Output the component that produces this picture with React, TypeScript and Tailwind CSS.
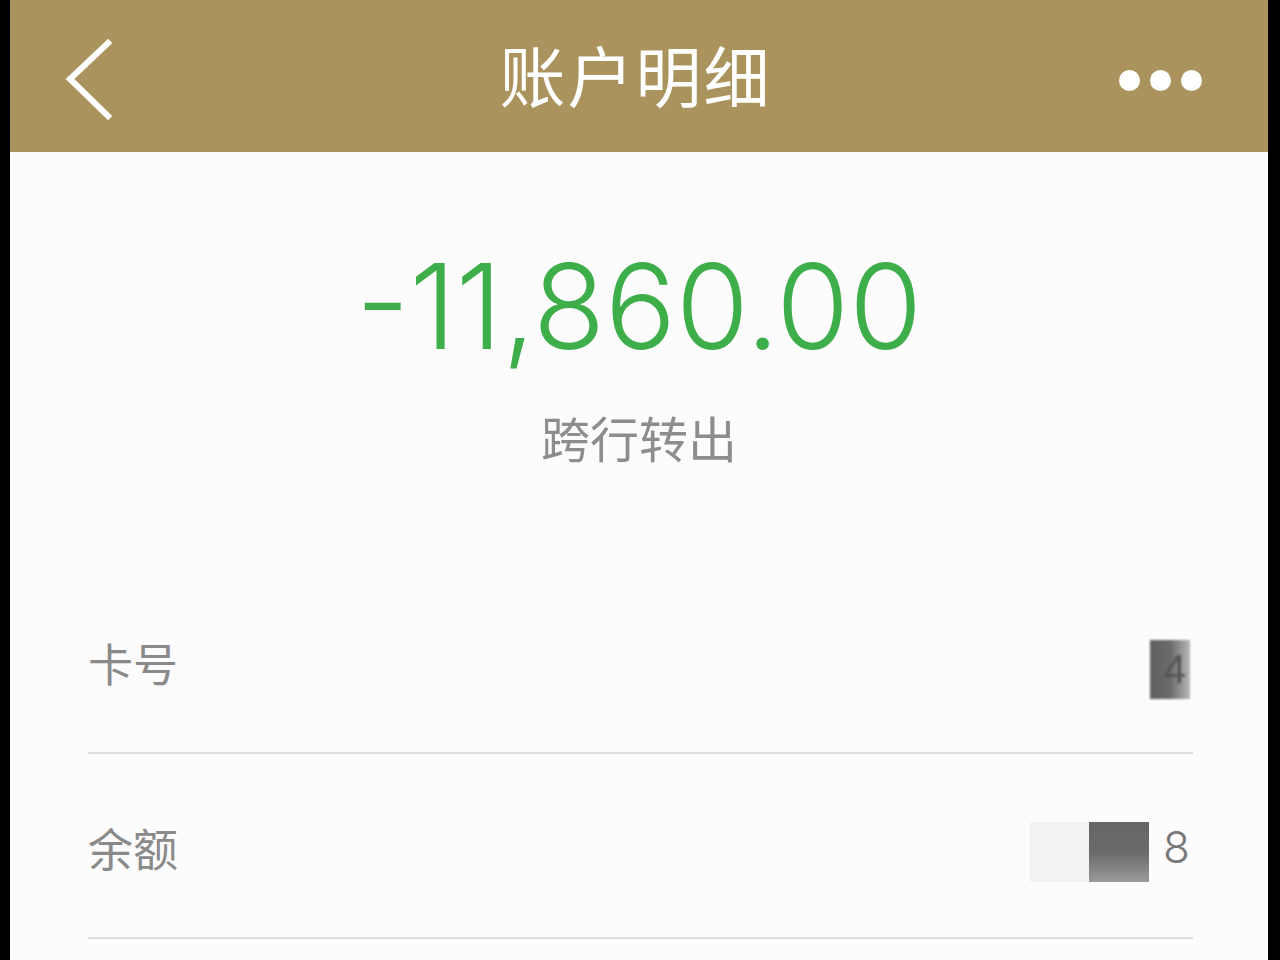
import React from 'react';

const cjk = { fontFamily: '"Noto Sans CJK SC", "Noto Sans", sans-serif' };

const DetailRow = ({ label, children }: { label: string; children: React.ReactNode }) => (
    <div className="flex h-[185px] items-center justify-between border-b-2 border-[#dcdcdc] pt-[3px]">
        <span className="text-[45px] leading-none text-[#8a8a8a]" style={cjk}>{label}</span>
        <div className="flex items-center">{children}</div>
    </div>
);

const App = () => {
    return (
        <div className="flex h-[960px] w-full bg-black pl-[10px] pr-[12px] overflow-hidden">
            <div className="flex w-full flex-col bg-[#fcfcfc]">
                {/* Top bar */}
                <div className="flex h-[152px] shrink-0 items-center justify-between bg-[#aa935d] pl-[52px] pr-[66px]">
                    <svg className="mt-[8px]" width="50" height="82" viewBox="0 0 50 82" fill="none">
                        <path d="M46 4 L8 40 L46 77" stroke="#ffffff" strokeWidth="6" strokeLinecap="square" strokeLinejoin="miter" />
                    </svg>
                    <span className="mb-[6px] pl-[40px] text-[66px] leading-none tracking-[2px] text-white" style={cjk}>
                        账户明细
                    </span>
                    <div className="mt-[8px] flex items-center gap-[10px]">
                        <span className="h-[21px] w-[21px] rounded-full bg-white" />
                        <span className="h-[21px] w-[21px] rounded-full bg-white" />
                        <span className="h-[21px] w-[21px] rounded-full bg-white" />
                    </div>
                </div>

                {/* Amount */}
                <div className="flex flex-col items-center">
                    <span
                        className="mt-[95px] text-[118px] font-[350] leading-none text-[#3dae49]"
                        style={{ fontFamily: 'Inter, Roboto, "Liberation Sans", sans-serif' }}
                    >
                        -11,860.00
                    </span>
                    <span className="mt-[47px] text-[49px] leading-none text-[#8d8d8d]" style={cjk}>
                        跨行转出
                    </span>
                </div>

                {/* Details */}
                <div className="mt-[108px] pl-[78px] pr-[75px]">
                    <DetailRow label="卡号">
                        <div className="mr-[3px] mt-[14px] flex h-[59px] w-[40px] items-center justify-end bg-gradient-to-r from-[#606060] via-[#6a6a6a] to-[#b8b8b8] pr-[4px] blur-[1px]">
                            <span className="text-[40px] leading-none text-[#555]" style={{ fontFamily: '"Liberation Sans", sans-serif' }}>4</span>
                        </div>
                    </DetailRow>
                    <DetailRow label="余额">
                        <div className="mt-[10px] h-[60px] w-[59px] bg-[#f3f3f3]" />
                        <div className="mt-[10px] h-[60px] w-[60px] bg-gradient-to-b from-[#666666] via-[#6a6a6a] to-[#9a9a9a]" />
                        <span
                            className="ml-[14px] mr-[3px] text-[44px] font-light leading-none text-[#777]"
                            style={{ fontFamily: 'Inter, Roboto, "Liberation Sans", sans-serif' }}
                        >
                            8
                        </span>
                    </DetailRow>
                </div>
            </div>
        </div>
    );
};

export default App;
